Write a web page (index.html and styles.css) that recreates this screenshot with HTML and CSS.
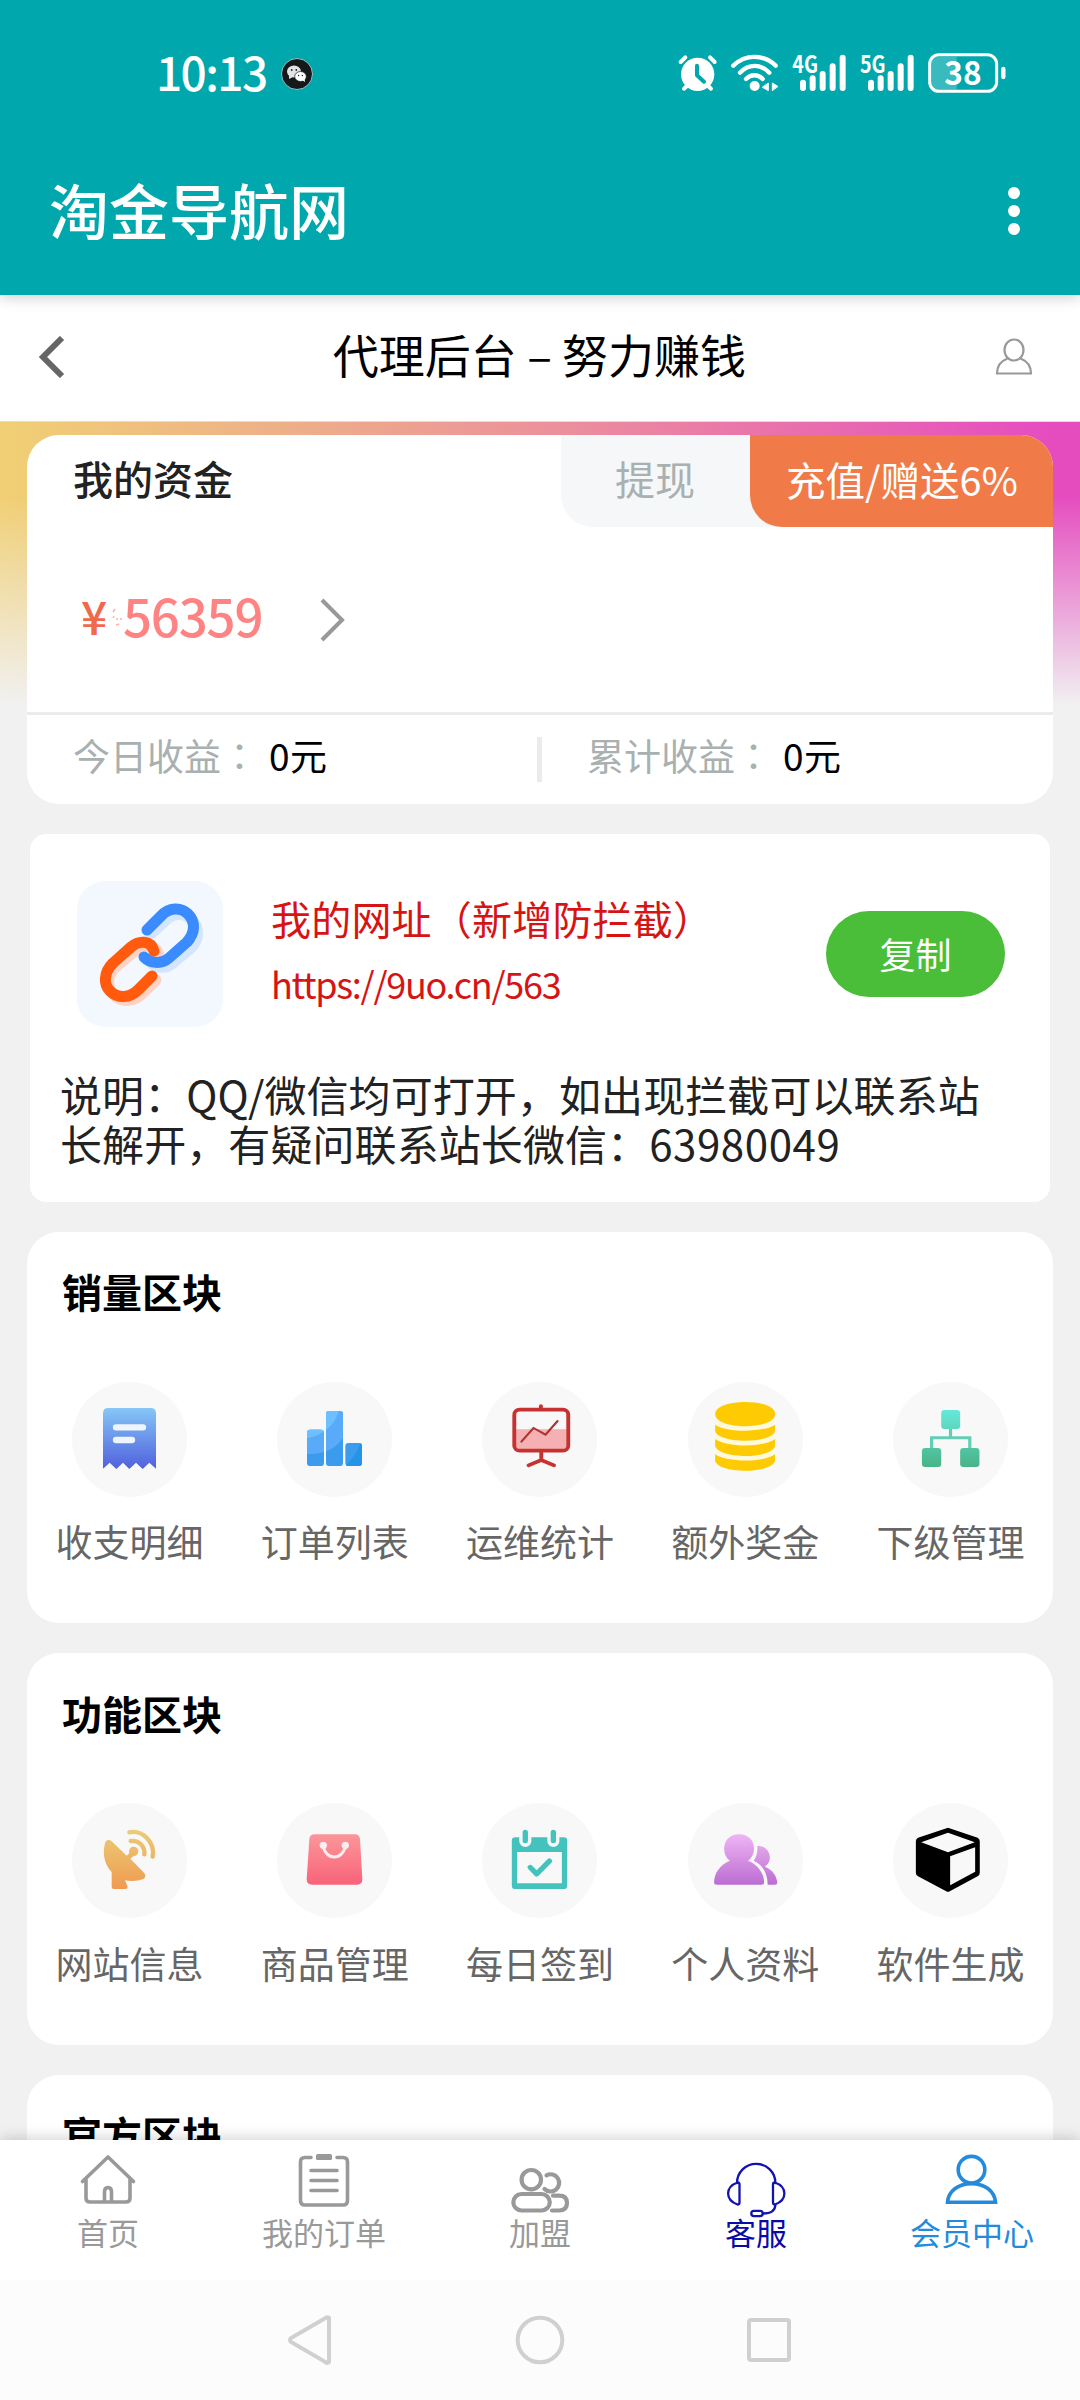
FILE: index.html
```html
<!DOCTYPE html>
<html lang="zh-CN">
<head>
<meta charset="utf-8">
<title>淘金导航网</title>
<link rel="stylesheet" href="styles.css">
</head>
<body>
<header class="app-header">
  <div class="status-bar">
    <div class="clock">
      <span class="time">10:13</span>
      <svg class="wechat" viewBox="0 0 32 32"><circle cx="16" cy="16" r="15.5" fill="#15191b" stroke="#8fc5c6"/><ellipse cx="13" cy="13.5" rx="7" ry="6" fill="#e4e4e4"/><path d="M8 17l0 4 4-2z" fill="#e4e4e4"/><ellipse cx="19.5" cy="18.5" rx="5.8" ry="5" fill="#fff" stroke="#15191b" stroke-width=".7"/><path d="M21 22l3 2-.5-4z" fill="#fff"/><g fill="#222"><circle cx="10.7" cy="12" r=".9"/><circle cx="15.3" cy="12" r=".9"/><circle cx="17.6" cy="17.5" r=".7"/><circle cx="21.4" cy="17.5" r=".7"/></g></svg>
    </div>
    <svg class="status-icons" viewBox="0 0 1080 270" fill="none" stroke="#fff" stroke-linecap="round">
      <circle cx="113" cy="133" r="50" fill="#fff" stroke="none"/>
      <path d="M62 96L76 82M150 82L164 96M72 176L84 165M153 176L141 165" stroke-width="12"/>
      <path d="M111 107V136L132 155" stroke="#00a7ac" stroke-width="12" stroke-linejoin="round"/>
      <path d="M220 107C256 72 311 72 347 107M240 128C266 101 302 101 328 128M258 147C273 132 293 132 308 147" stroke-width="13"/>
      <circle cx="284" cy="168" r="15" fill="#fff" stroke="none"/>
      <path d="M308 171L325 159V181ZM353 169L337 159V181Z" fill="#fff" stroke="#fff" stroke-width="3"/>
      <path d="M429 158V174M458 145V174M488 132V174M518 109V174M548 83V174M633 158V174M662 145V174M692 132V174M722 109V174M752 83V174" stroke-width="18"/>
      <path d="M828 80H890V179H828Q814 179 814 160V100Q814 80 828 80Z" fill="#fff" fill-opacity=".22" stroke="none"/>
      <rect x="809" y="74" width="201" height="110" rx="28" stroke-width="9"/>
      <path d="M1030 117V141" stroke-width="13"/>
      <g class="status-text"><text x="397" y="128" font-size="70" textLength="77" lengthAdjust="spacingAndGlyphs">4G</text><text x="600" y="128" font-size="70" textLength="77" lengthAdjust="spacingAndGlyphs">5G</text><text x="853" y="165" font-size="98" textLength="112" lengthAdjust="spacingAndGlyphs">38</text></g>
    </svg>
  </div>
  <div class="title-row">
    <h1>淘金导航网</h1>
    <div class="more"><i></i><i></i><i></i></div>
  </div>
</header>
<nav class="page-nav">
  <svg class="back" viewBox="0 0 28 42"><path d="M24 2L5 21L24 40" fill="none" stroke="#666" stroke-width="6"/></svg>
  <h2>代理后台 – 努力赚钱</h2>
  <svg class="profile" viewBox="0 0 38 38" fill="none" stroke="#999" stroke-width="2.200"><ellipse cx="19" cy="12" rx="9.5" ry="10.5"/><path d="M12.500 20.500C6 23 2 28 2 35.500H36C36 28 32 23 25.500 20.500"/></svg>
</nav>
<main>
  <section class="card funds">
    <div class="funds-head">
      <span class="funds-title">我的资金</span>
      <div class="withdraw">提现</div>
      <div class="recharge">充值/赠送6%</div>
    </div>
    <div class="balance">
      <span class="yen">¥</span>
      <svg class="smudge" viewBox="0 0 12 30" fill="none" stroke="#fbb0a5"><path d="M2 7l2-3M2 13l1-2M5 14h2M5 20l3-1M9 14l2 0" stroke-width="1.500"/></svg>
      <span class="amount">56359</span>
      <svg class="arrow" viewBox="0 0 28 46"><path d="M3 3L23 23L3 43" fill="none" stroke="#999" stroke-width="4"/></svg>
    </div>
    <div class="income">
      <div class="income-item">今日收益<span class="colon">：</span><b>0元</b></div>
      <div class="income-item total">累计收益<span class="colon">：</span><b>0元</b></div>
    </div>
  </section>

  <section class="card link-card">
    <div class="link-row">
      <div class="link-icon">
        <svg viewBox="0 0 146 146" fill="none" stroke-width="11" stroke-linecap="round" stroke-linejoin="round">
          <g transform="translate(4 5)"><path d="M70 48L84 35C92 26 104 27 111 34C119 42 118 54 110 62L92 77C84 84 74 82 68 75" stroke="#d3e5ff"/><path d="M78 69C75 58 62 58 54 65L36 80C25 89 26 102 33 109C41 117 54 116 62 107L75 94" stroke="#ffd2c3"/></g>
          <path d="M70 49L84 35C92 26 104 26 111 33C119 41 118 52 110 61L92 77C84 84 73 82 67 76" stroke="#3a8bff"/>
          <path d="M77 70C74 59 62 59 54 66L36 82C27 91 26 103 33 110C41 118 53 117 61 109L75 95" stroke="#ff5a0d"/>
        </svg>
      </div>
      <div class="link-text">
        <div class="link-title">我的网址（新增防拦截）</div>
        <div class="link-url">https://9uo.cn/563</div>
      </div>
      <div class="copy">复制</div>
    </div>
    <p class="note">说明：QQ/微信均可打开，如出现拦截可以联系站长解开，有疑问联系站长微信：<span class="wechat-id">63980049</span></p>
  </section>

  <section class="card block sales">
    <h3>销量区块</h3>
    <div class="grid">
      <div class="cell">
        <svg viewBox="66 36 345 345"><defs><linearGradient id="g1" x2="0" y2="1"><stop stop-color="#86c7f7"/><stop offset="1" stop-color="#5060dd"/></linearGradient></defs><path d="M159 296V130Q159 114 175 114H302Q318 114 318 130V296L298 278L278 297L258 278L238 297L219 278L199 297L179 278Z" fill="url(#g1)"/><path d="M198 172H279M198 210H246" stroke="#eff5ff" stroke-width="19" stroke-linecap="round"/></svg>
        <span>收支明细</span></div>
      <div class="cell">
        <svg viewBox="681 36 345 345"><defs><clipPath id="bars"><rect x="771" y="179" width="51" height="109" rx="10"/><rect x="828" y="123" width="51" height="165" rx="10"/><rect x="886" y="219" width="50" height="69" rx="10"/></clipPath></defs><g clip-path="url(#bars)"><path d="M760 110H940V300H760Z" fill="#3b9bec"/><path d="M771 252Q850 255 885 195V110H771Z" fill="#59aaf9"/><path d="M771 205Q845 190 867 123V110H760V205Z" fill="#6dbfff"/><path d="M885 288Q925 250 930 219H940V290H885Z" fill="#2394e8"/></g></svg>
        <span>订单列表</span></div>
      <div class="cell">
        <svg viewBox="62 36 324 345" preserveAspectRatio="none" fill="none" stroke="#c5322f" stroke-width="11" stroke-linecap="round"><path d="M158 178H300V238H158Z" fill="#f4b0b2" stroke="none"/><rect x="153" y="119" width="152" height="123" rx="15"/><path d="M228 108V116M229 245V270M193 286L229 270L265 286"/><path d="M173 215L207 174L241 194L275 153" stroke="#b03332" stroke-width="6"/></svg>
        <span>运维统计</span></div>
      <div class="cell">
        <svg viewBox="638 36 322 345" preserveAspectRatio="none"><path d="M716 150H880V270H716Z" fill="#fff9dc"/><g fill="#fecb03"><path d="M714 132C714 84 882 84 882 132C882 181 714 181 714 132Z"/><path d="M714 164C747 188 849 188 882 164V184C870 222 726 222 714 184Z"/><path d="M714 207C747 233 849 233 882 207V228C870 268 726 268 714 228Z"/><path d="M714 253C747 278 849 278 882 253V273C870 312 726 312 714 273Z"/></g></svg>
        <span>额外奖金</span></div>
      <div class="cell">
        <svg viewBox="1212 36 322 345" preserveAspectRatio="none"><defs><linearGradient id="g5" gradientUnits="userSpaceOnUse" x1="0" y1="120" x2="0" y2="291"><stop stop-color="#66e8da"/><stop offset="1" stop-color="#48b387"/></linearGradient></defs><g fill="url(#g5)"><rect x="1347" y="120" width="53" height="57" rx="9"/><rect x="1293" y="234" width="54" height="57" rx="9"/><rect x="1400" y="234" width="54" height="57" rx="9"/></g><path d="M1373 177V203M1320 234V203H1427V234" fill="none" stroke="#65cdb6" stroke-width="9"/></svg>
        <span>下级管理</span></div>
    </div>
  </section>

  <section class="card block tools">
    <h3>功能区块</h3>
    <div class="grid">
      <div class="cell">
        <svg viewBox="66 39 345 345"><defs><linearGradient id="g6" gradientUnits="userSpaceOnUse" x1="0" y1="120" x2="0" y2="297"><stop stop-color="#e9cd78"/><stop offset="1" stop-color="#f19a50"/></linearGradient></defs><path d="M166 156Q175 144 185 154L230 197L238 189A14 14 0 1 1 251 198L241 206L282 248Q291 259 280 267Q254 277 225 271L233 290Q233 297 226 297H192Q185 297 185 291V246C159 218 158 184 166 156Z" fill="url(#g6)"/><path d="M238 127C277 119 316 156 308 200M242 153C266 149 286 170 283 193" fill="none" stroke="url(#g6)" stroke-width="13" stroke-linecap="round"/></svg>
        <span>网站信息</span></div>
      <div class="cell">
        <svg viewBox="681 39 345 345"><defs><linearGradient id="g7" x2="0" y2="1"><stop stop-color="#fb969a"/><stop offset="1" stop-color="#f86379"/></linearGradient></defs><path d="M778 148Q779 133 794 133H914Q929 133 930 148L937 268Q937 284 921 284H787Q770 284 770 268Z" fill="url(#g7)"/><path d="M820 167C825 212 880 212 886 167" fill="none" stroke="#feecee" stroke-width="9"/><g fill="#feecee"><circle cx="820" cy="166" r="11"/><circle cx="886" cy="166" r="11"/></g></svg>
        <span>商品管理</span></div>
      <div class="cell">
        <svg viewBox="62 39 324 345" preserveAspectRatio="none"><path d="M146 152Q146 142 156 142H292Q302 142 302 152V287Q302 297 292 297H156Q146 297 146 287ZM161 186V280H287V186Z" fill="#44c3be" fill-rule="evenodd"/><g stroke-linecap="round" fill="none"><path d="M184 125V154M263 125V154" stroke="#f8f8f8" stroke-width="34"/><path d="M184 127V152M263 127V152" stroke="#44c3be" stroke-width="15"/><path d="M198 232L216 252L252 213" stroke="#44c3be" stroke-width="15" stroke-linejoin="round"/></g></svg>
        <span>每日签到</span></div>
      <div class="cell">
        <svg viewBox="638 39 322 345" preserveAspectRatio="none"><defs><linearGradient id="g9" gradientUnits="userSpaceOnUse" x1="0" y1="133" x2="0" y2="284"><stop stop-color="#eeb5f3"/><stop offset="1" stop-color="#bb6dd2"/></linearGradient></defs><g fill="url(#g9)"><path d="M755 212C730 195 732 133 781 133C831 133 832 195 806 212C834 224 851 249 851 278Q851 284 844 284H718Q711 284 711 278C711 249 728 224 755 212Z"/><path d="M832 168C866 165 880 212 853 230C876 239 887 260 888 278Q888 284 881 284H861C861 250 847 224 822 212Q834 194 832 168Z"/></g></svg>
        <span>个人资料</span></div>
      <div class="cell">
        <svg viewBox="1212 39 322 345" preserveAspectRatio="none"><path d="M1366 113L1449 143Q1455 147 1455 154V248Q1455 255 1449 259L1371 304Q1366 307 1361 304L1282 259Q1276 255 1276 248V154Q1276 147 1282 143ZM1366 128L1291 157L1366 187L1441 157ZM1442 172L1372 199V286L1442 245Z" fill="#000" fill-rule="evenodd"/></svg>
        <span>软件生成</span></div>
    </div>
  </section>

  <section class="card block official"><h3>官方区块</h3></section>
</main>
<footer class="tab-bar">
  <div class="tab"><svg viewBox="0 0 216 80"><path d="M82.500 41.500L108 17L133.500 41.500M86 39V58Q86 62 90 62H126Q130 62 130 58V39M104.500 61V52Q104.500 47.500 108 47.500Q111.500 47.500 111.500 52V61"/></svg><span>首页</span></div>
  <div class="tab"><svg viewBox="0 0 216 80"><path d="M95 17.500H89Q84.500 17.500 84.500 22V60.500Q84.500 65 89 65H127Q131.500 65 131.500 60.500V22Q131.500 17.500 127 17.500H121M95 30.500H121M95 40.500H121M95 50.500H121"/><rect x="100" y="14" width="16" height="6" rx="1.500" fill="#999" stroke="none"/></svg><span>我的订单</span></div>
  <div class="tab join"><svg viewBox="0 0 216 80"><circle cx="99.300" cy="39.700" r="9.700"/><rect x="81.300" y="54" width="36.500" height="16.500" rx="8.200"/><path d="M114.500 35.300A8.600 8.600 0 1 1 112.500 49M121 55.700H127Q135 55.700 135 63Q135 70.500 127 70.500H120"/></svg><span>加盟</span></div>
  <div class="tab service"><svg viewBox="0 0 216 80"><path d="M89 43A19.200 19.200 0 0 1 127.400 43M91.500 44.500Q91.500 42.500 89.500 42.500C77 47 77 60 89.500 64.500Q91.500 64.500 91.500 62.500ZM125 44.500Q125 42.500 127 42.500C139.500 47 139.500 60 127 64.500Q125 64.500 125 62.500ZM127.400 65Q127 73.500 115 73.500"/><rect x="103.300" y="70.800" width="11.400" height="5.300" rx="2.600"/></svg><span>客服</span></div>
  <div class="tab active"><svg viewBox="0 0 216 80"><circle cx="107.500" cy="29.700" r="13.300"/><path d="M83.500 62.300C84.500 51 94 43.700 107.500 43.700S130.500 51 131.500 62.300Z"/></svg><span>会员中心</span></div>
</footer>
<div class="system-nav">
  <svg viewBox="0 0 50 50"><path d="M43 3V47Q41.500 49 39.500 47L5 27Q3 25 5 23L39.500 3Q41.500 1.500 43 3Z"/></svg>
  <svg viewBox="0 0 50 50"><circle cx="25" cy="25" r="22.300"/></svg>
  <svg viewBox="0 0 50 50"><rect x="5" y="5" width="40" height="40" rx="2"/></svg>
</div>
</body>
</html>
```
FILE: styles.css
```css
* { box-sizing: border-box; }
body {
  margin: 0;
  width: 1080px;
  height: 2400px;
  overflow: hidden;
  display: flex;
  flex-direction: column;
  background: #f1f1f1;
  font-family: "Noto Sans CJK SC", sans-serif;
  color: #000;
}
h1, h2, h3, p { margin: 0; font-weight: 400; }
svg { display: block; flex: none; }

.app-header {
  flex: none;
  height: 295px;
  background: #00a7ac;
  color: #fff;
  box-shadow: 0 2px 14px rgba(0, 0, 0, .2);
  position: relative;
  z-index: 1;
}
.status-bar {
  height: 145px;
  display: flex;
  justify-content: space-between;
  padding: 30px 60px 0 156px;
}
.clock { display: flex; align-items: center; height: 87px; gap: 14px; }
.time { font-size: 46px; font-weight: 500; letter-spacing: -1.6px; line-height: 83px; padding-bottom: 4px; }
.wechat { width: 32px; height: 32px; }
.status-icons { width: 360px; height: 90px; }
.status-text { fill: #fff; stroke: none; font-weight: 700; }
.title-row {
  height: 132px;
  display: flex;
  align-items: center;
  justify-content: space-between;
  padding: 0 60px 0 49px;
}
h1 { font-size: 60px; font-weight: 500; line-height: 86px; padding-bottom: 4px; }
.more { display: flex; flex-direction: column; gap: 6px; }
.more i { width: 12px; height: 12px; border-radius: 50%; background: #fff; }

.page-nav {
  flex: none;
  height: 127px;
  display: flex;
  align-items: center;
  justify-content: space-between;
  padding: 0 47px 2px 38px;
  background: #fff;
  border-bottom: 1px solid #ddd;
}
.back { width: 28px; height: 42px; }
h2 { font-size: 46px; line-height: 60px; padding: 0 0 8px 18px; }
.profile { width: 38px; height: 38px; }

main {
  flex: 1;
  min-height: 0;
  overflow: hidden;
  padding: 13px 27px 0;
  background:
    linear-gradient(180deg, rgba(241, 241, 241, 0) 75px, #f1f1f1 284px),
    linear-gradient(90deg, #f0d074, #ec929b 50%, #e54dbf 97%);
}
.card { background: #fff; border-radius: 32px; overflow: hidden; }

.funds { height: 369px; }
.funds-head { display: flex; height: 92px; line-height: 87px; font-size: 40px; }
.funds-title { flex: 1; padding-left: 46px; color: #222; font-weight: 500; }
.withdraw {
  width: 221px;
  margin-right: -32px;
  padding-left: 54px;
  background: #f5f7f9;
  color: #a9b0b0;
  border-radius: 0 0 0 32px;
}
.recharge {
  width: 303px;
  padding-left: 36px;
  background: #f07b48;
  color: #fff;
  border-radius: 0 0 0 32px;
  font-size: 39.500px;
}
.balance { height: 185px; display: flex; align-items: center; padding-left: 54px; }
.yen { width: 30px; font-size: 46px; line-height: 60px; padding-bottom: 9px; color: #f0694a; font-weight: 500; }
.smudge { width: 12px; height: 30px; }
.amount { font-size: 51px; line-height: 60px; padding-bottom: 9px; color: #ff8383; font-weight: 500; width: 196px; letter-spacing: -1.2px; }
.arrow { width: 28px; height: 46px; }
.income {
  height: 92px;
  border-top: 3px solid #ebebeb;
  display: flex;
  align-items: center;
  font-size: 37px;
  color: #a9b0b0;
}
.income-item { flex: 0 0 510px; height: 45px; line-height: 37px; padding-left: 46px; display: flex; }
.income-item.total { border-left: 5px solid #ebebeb; padding-left: 45px; }
.colon { font-family: "Noto Sans CJK TC", sans-serif; width: 48px; }
.income b { font-weight: 400; color: #000; letter-spacing: .5px; }

.link-card { height: 368px; margin: 30px 3px; border-radius: 16px; padding: 47px 45px 0 47px; }
.link-row { display: flex; height: 146px; }
.link-icon { width: 146px; height: 146px; border-radius: 28px; background: #f2f8fe; }
.link-text { flex: 1; padding: 7px 0 0 48px; color: #d71414; }
.link-title { font-size: 40px; line-height: 60px; white-space: nowrap; letter-spacing: .2px; }
.link-url { font-size: 36px; line-height: 60px; margin-top: 5px; letter-spacing: -1.300px; }
.copy {
  width: 179px;
  height: 86px;
  margin-top: 30px;
  border-radius: 43px;
  background: #4abe38;
  color: #fff;
  font-size: 36px;
  line-height: 84px;
  text-align: center;
}
.note { margin: 42px -30px 0 -17px; width: 930px; font-size: 42px; line-height: 49px; color: #222; letter-spacing: .08px; }
.wechat-id { letter-spacing: .6px; }

.block { height: 391px; margin-bottom: 30px; }
.tools { height: 392px; }
h3 { height: 150px; padding: 29px 0 0 35px; font-size: 40px; line-height: 60px; font-weight: 700; }
.tools h3 { padding-top: 30px; }
.official h3 { padding-top: 29px; }
.grid { display: grid; grid-template-columns: repeat(5, 1fr); }
.cell { display: flex; flex-direction: column; align-items: center; font-size: 37px; line-height: 56px; color: #666; white-space: nowrap; }
.cell svg { width: 115px; height: 115px; border-radius: 50%; background: #f8f8f8; }
.cell span { margin-top: 16px; }
.tools .cell span { margin-top: 17px; }

.tab-bar {
  flex: none;
  height: 140px;
  display: flex;
  background: #fff;
  box-shadow: 0 -2px 14px rgba(0, 0, 0, .18);
  position: relative;
  z-index: 1;
}
.tab { width: 216px; color: #999; font-size: 31px; line-height: 40px; text-align: center; }
.tab svg { width: 216px; height: 80px; fill: none; stroke: #999; stroke-width: 3.600; stroke-linecap: round; stroke-linejoin: round; }
.tab span { display: block; margin-top: -8px; }
.tab.join svg { stroke-width: 4.200; }
.tab.service { color: #0a0aa8; }
.tab.service svg { stroke: #1212b0; stroke-width: 2.300; }
.tab.active { color: #248adb; }
.tab.active svg { stroke: #248adb; stroke-linecap: butt; stroke-linejoin: miter; }
.system-nav {
  flex: none;
  height: 120px;
  display: flex;
  align-items: center;
  justify-content: center;
  gap: 179px;
  background: #fcfcfc;
  position: relative;
  z-index: 2;
}
.system-nav svg { width: 50px; height: 50px; fill: none; stroke: #d0d0d0; stroke-width: 4; }
```
